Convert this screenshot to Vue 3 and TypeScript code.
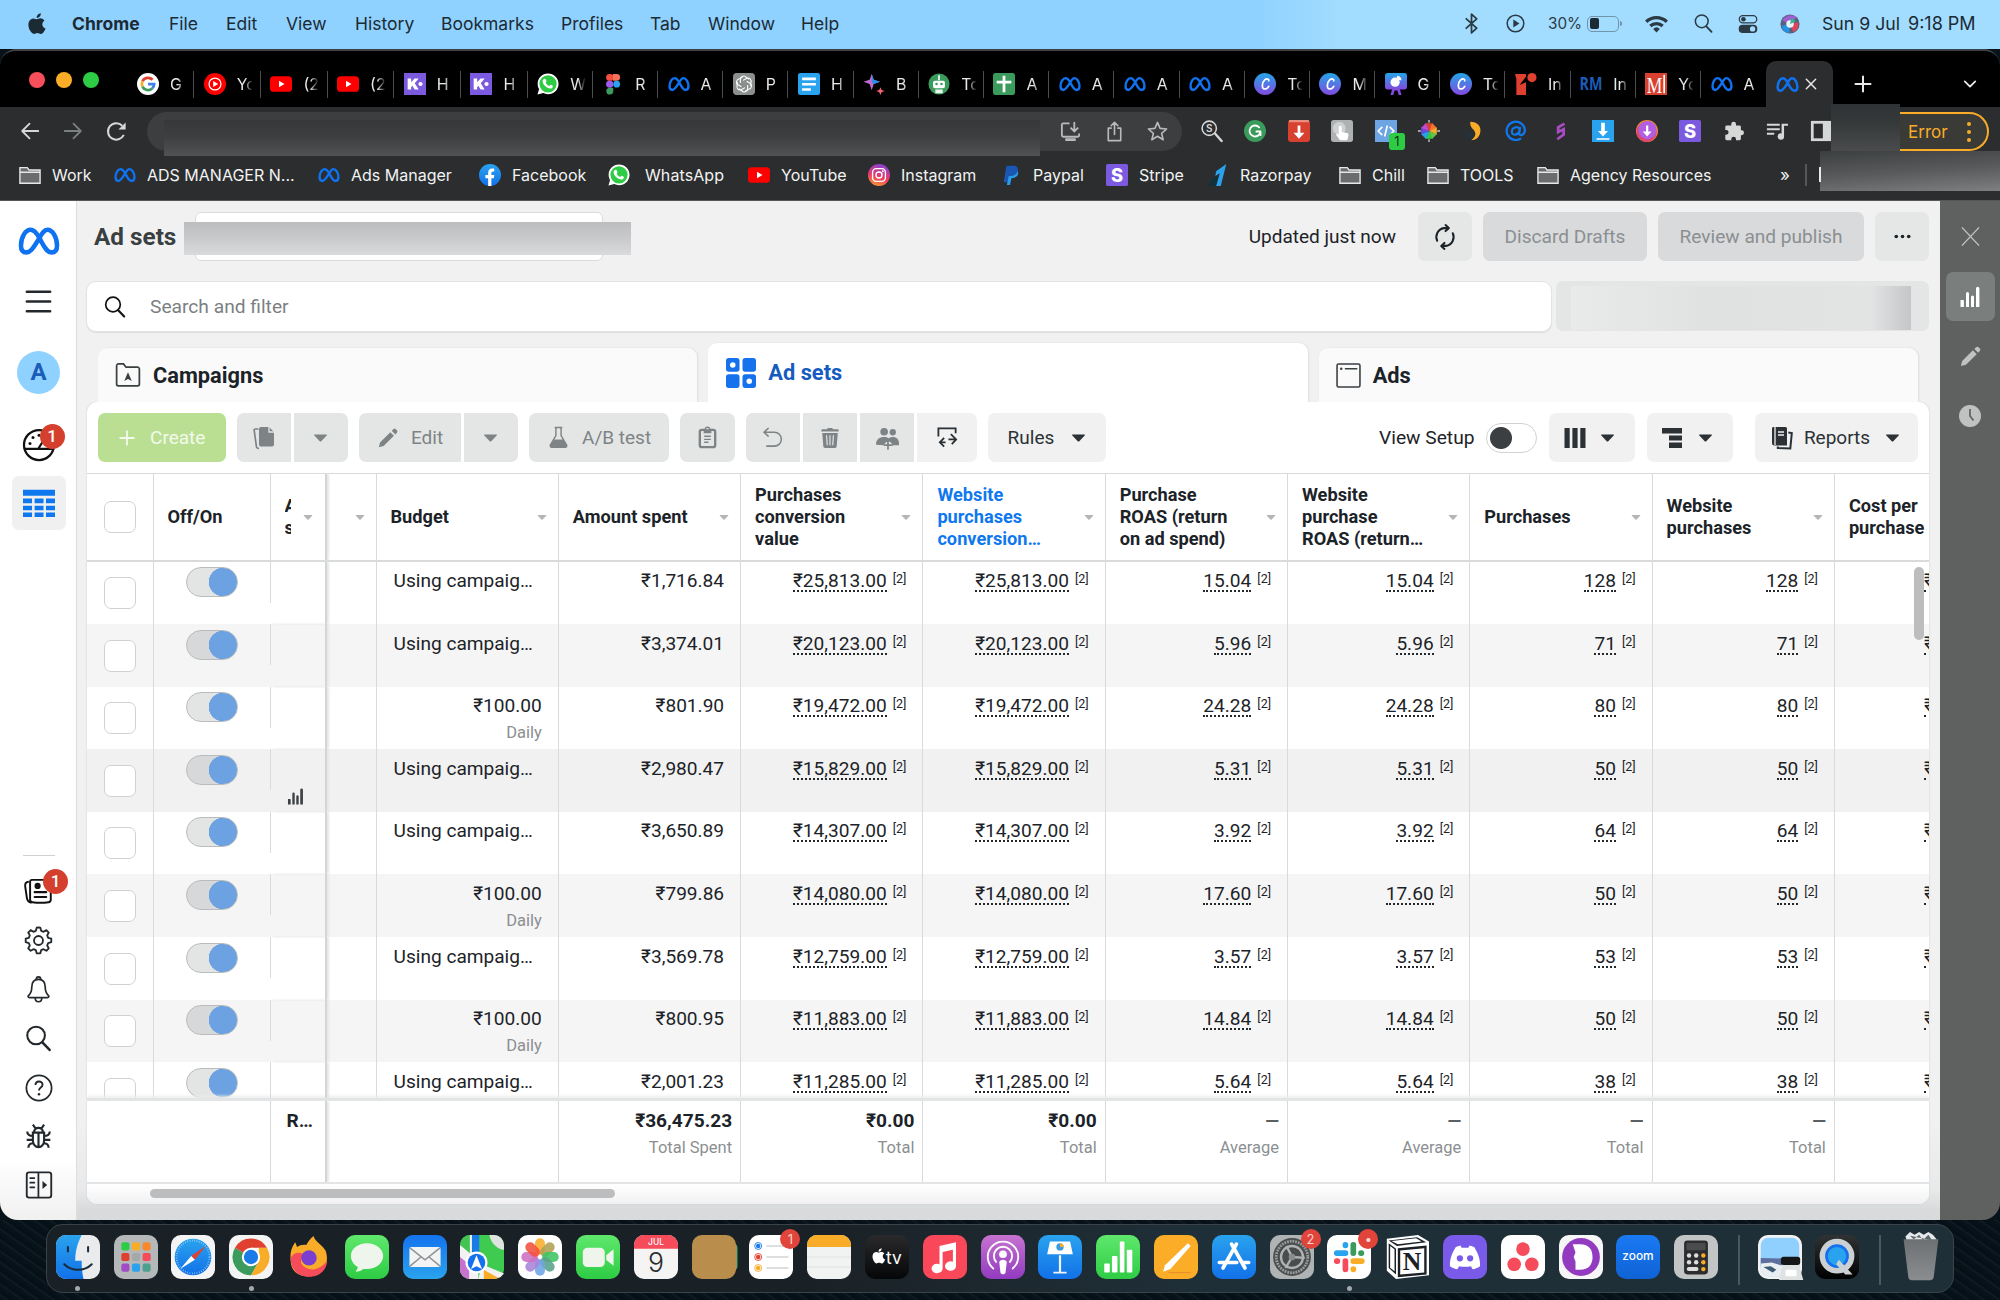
<script setup lang="ts">
import { h } from 'vue'

type IconProps = { n: string; s?: number; w?: number }

const line = (d: string, w = 1.6) =>
  `<path d="${d}" fill="none" stroke="currentColor" stroke-width="${w}" stroke-linecap="round" stroke-linejoin="round"/>`
const fill = (d: string, c = 'currentColor') => `<path d="${d}" fill="${c}"/>`
const dot = (x: number, y: number, r: number, c: string) => `<circle cx="${x}" cy="${y}" r="${r}" fill="${c}"/>`
const box = (x: number, y: number, w: number, hh: number, r: number, c: string) =>
  `<rect x="${x}" y="${y}" width="${w}" height="${hh}" rx="${r}" fill="${c}"/>`
const tile = (c: string) => box(0, 0, 24, 24, 5.4, c)
const grad = (id: string, a: string, b: string) =>
  `<defs><linearGradient id="${id}" x1="0" y1="0" x2="0" y2="1"><stop offset="0" stop-color="${a}"/><stop offset="1" stop-color="${b}"/></linearGradient></defs>`
const petals = (n: number, cols: string[], draw: (c: string) => string) =>
  Array.from({ length: n }, (_, i) => `<g transform="rotate(${(i * 360) / n} 12 12)">${draw(cols[i % cols.length])}</g>`).join('')

const applePath = 'M17.6 12.700c0-2.500 2-3.600 2.100-3.700-1.200-1.700-3-1.900-3.600-1.900-1.500-.2-3 .9-3.700.9-.8 0-2-.9-3.200-.9C7.500 7.100 6 8 5.100 9.500c-1.800 3-.5 7.500 1.200 10 .9 1.200 1.900 2.500 3.200 2.500s1.800-.8 3.300-.8 2 .8 3.300.8c1.400 0 2.300-1.200 3.100-2.400 1-1.400 1.400-2.800 1.400-2.900-.1 0-3-1.100-3-4zM15.100 5.300c.7-.8 1.200-2 1-3.200-1 .1-2.200.7-2.900 1.500-.6.700-1.200 1.900-1 3 1.100.1 2.200-.5 2.900-1.300z'
const metaPath = 'M12 9.800C10.300 7 8.900 5.600 7.200 5.600 4.200 5.600 1.700 10 1.700 14.500c0 2.600 1.100 4 3.100 4S8.200 17 12 10.600c1.900-3.400 3.100-5 4.800-5 3 0 5.500 4.400 5.500 8.900 0 2.600-1.100 4-3.100 4S16 17.200 13.700 13z'
const barsPath = 'M2.500 15h2.600a.8.800 0 0 1 .8.800V22H2.500zM8 8.500a1.500 1.500 0 0 1 3 0V22H8zM13 12a1.500 1.500 0 0 1 3 0v10h-3zM18 3.500a1.700 1.700 0 0 1 3.400 0V22H18z'
const pencilPath = 'M2 22l1.300-5.200L14.500 5.600l4 4L7.200 20.700zM16 4.200l1.800-1.800a1.900 1.900 0 0 1 2.700 0l1.200 1.200a1.900 1.900 0 0 1 0 2.700L20 8.100z'
const slack =
  box(3.800, 8.300, 7.800, 3.100, 1.500, '#2aa3ee') + box(8.500, 3.800, 3.100, 3.400, 1.500, '#2aa3ee') +
  box(12.800, 3.800, 3.100, 7.600, 1.500, '#3a9b5c') + box(17, 8.300, 3.300, 3.100, 1.500, '#3a9b5c') +
  box(12.800, 12.700, 7.700, 3.100, 1.500, '#f8ac28') + box(12.800, 17, 3.100, 3.300, 1.500, '#f8ac28') +
  box(8.500, 12.700, 3.100, 7.600, 1.500, '#f54b5b') + box(3.800, 12.700, 3.400, 3.100, 1.500, '#f54b5b')

const icons: Record<string, string> = {
  apple: fill(applePath),
  meta: `<path d="${metaPath}" fill="none" stroke="#0f72f0" stroke-width="2.600" stroke-linejoin="round"/>`,
  bt: line('M7 7.500l10 9-5 4.500V3l5 4.500-10 9', 1.700),
  play: `<circle cx="12" cy="12" r="9.500" fill="none" stroke="currentColor" stroke-width="1.700"/>` + fill('M9.500 7.500l7 4.500-7 4.500z'),
  wifi: fill('M1 9.200a16 16 0 0 1 22 0l-2.200 2.300a12.800 12.800 0 0 0-17.600 0zM5 13.300a10.200 10.200 0 0 1 14 0l-2.200 2.300a7 7 0 0 0-9.600 0zM8.800 17.200a4.700 4.700 0 0 1 6.400 0L12 20.600z'),
  lens: `<circle cx="10" cy="9.500" r="7.300" fill="none" stroke="currentColor" stroke-width="1.700"/>` + line('M15.200 15.200l6 6.300', 2.100),
  control: `<rect x="1.500" y="2" width="21" height="8.600" rx="4.300" fill="none" stroke="currentColor" stroke-width="1.500"/>` + dot(6.5, 6.300, 2.800, 'currentColor') + box(.8, 13, 22.400, 9.800, 4.900, 'currentColor') + dot(17.500, 17.900, 3.200, '#a5ddff'),
  siri: dot(12, 12, 11.500, '#53627a') + fill('M3 8a11 11 0 0 1 17-4L12 12z', '#a05fd0') + fill('M22 10a11 11 0 0 1-6 12l-4-10z', '#e0435d') + fill('M2 14a11 11 0 0 0 9 9l1-11z', '#2493e6') + dot(12, 12, 4.500, '#e8f3fa') + fill('M14 4l5 5-7 3z', '#36b28c'),
  google: dot(12, 12, 12, '#fff') + `<g fill="none" stroke-width="3"><path d="M17 7.300A6.800 6.800 0 0 0 6 9" stroke="#e0402f"/><path d="M6 9a6.800 6.800 0 0 0 0 6" stroke="#f8ac28"/><path d="M6 15a6.800 6.800 0 0 0 10.500 2" stroke="#3a9b5c"/><path d="M16.500 17a6.500 6.500 0 0 0 2.200-5H12" stroke="#3b82ea"/></g>`,
  ytm: dot(12, 12, 12, '#f00') + `<circle cx="12" cy="12" r="6.500" fill="none" stroke="#fff" stroke-width="1.300"/>` + fill('M10 8.700l5.500 3.300L10 15.300z', '#fff'),
  yt: box(0, 3.500, 24, 17, 4, '#f00') + fill('M9.800 8.500l6 3.500-6 3.500z', '#fff'),
  k: box(0, 0, 24, 24, 0, '#7c5ae0') + fill('M4 6h3.800v4.200L11.500 6H16l-4.300 5.300L16 18h-4.400l-2.500-4.200-1.300 1.500V18H4z', '#fff') + dot(18, 12, 2.300, '#fff'),
  wa: fill('M12 .5C5.600.5.700 5.400.700 11.600c0 2.200.6 4.200 1.600 5.900L.5 23.500l6.300-1.600c1.600.8 3.300 1.300 5.200 1.300 6.400 0 11.500-5.100 11.500-11.500S18.400.5 12 .5z', '#fff') + dot(12, 11.800, 9.400, '#2ecc45') + fill('M8.300 6.300c.6-.1 1 .1 1.200.6l.9 2-1 1.600c.9 1.700 2.200 2.900 3.900 3.700l1.400-1.500 2.600 1.200c.3 1.900-1.200 3.100-2.700 3.100-4 0-8.500-4.500-8.500-7.900 0-1.300 1-2.600 2.200-2.800z', '#fff'),
  figma: box(4.500, 1, 8, 7.500, 3.700, '#f2503c') + fill('M12 1h4a3.700 3.700 0 0 1 0 7.500h-4z', '#f5705c') + box(4.500, 8.500, 7.800, 7.500, 3.700, '#9d5bef') + dot(16, 12.200, 3.700, '#2aa3ee') + fill('M8 16h4.300v3.700A3.800 3.800 0 1 1 8 16z', '#3a9b5c'),
  gpt: box(0, 0, 24, 24, 4, '#8b908f') + petals(6, ['#fff'], c => `<path d="M8 11V6.800a3.600 3.600 0 0 1 6.500-2l3.200 2" fill="none" stroke="${c}" stroke-width="1.200"/>`),
  docs: box(0, 0, 24, 24, 2.500, '#2aa3ee') + fill('M4.500 5h15v2.800h-15zM4.500 10.800h15v2.700h-15zM4.500 16.500h9.500v2.800H4.500z', '#fff'),
  bard: fill('M9.500 1l2.200 6.300 6.800 2.200-6.800 2.500-2.200 6.800-2.300-6.800L.5 9.500l6.700-2.200z', '#c06bd0') + fill('M9.500 1l2.200 6.300 6.800 2.200-6.800 2.500-2.200-2z', '#2b8de8') + fill('M19 15.500l1.300 3 3.200 1.200-3.200 1.300-1.300 3-1.300-3-3.200-1.300 3.200-1.200z', '#f06272'),
  bot: dot(12, 12, 11.500, '#3a9b5c') + box(5.500, 8.500, 13, 8, 2, '#fff') + dot(9.300, 12, 1.400, '#3a9b5c') + dot(14.700, 12, 1.400, '#3a9b5c') + fill('M11 2.500h2V8h-2zM8 18h8v4H8z', '#eaf6ec'),
  sheet: box(0, 0, 24, 24, 2.500, '#3a9b5c') + fill('M10.500 3h3v5.500H20v3h-6.500V21h-3v-9.500H4v-3h6.500z', '#fff'),
  canva: grad('cv', '#22a6e8', '#8449e0') + dot(12, 12, 12, 'url(#cv)') + `<path d="M16 8.500c.7-2-2-3-4.300-.9-3 2.700-3.700 9.700-.2 9.800 2 .1 3.800-1.400 4.600-2.900" fill="none" stroke="#fff" stroke-width="1.900" stroke-linecap="round"/>`,
  chart: grad('ch', '#22a6e8', '#8449e0') + box(0, 0, 24, 18, 3, 'url(#ch)') + fill('M8 17l-2 7h3l1.500-5h3l1.500 5h3l-2-7z', '#8449e0') + dot(11, 10, 5, '#fff') + fill('M13 3a5 5 0 0 1 5 5h-5z', '#fff'),
  rdot: fill('M0 1h12v3L5 13l7-3v14H1.500V6.500z', '#e0402f') + dot(18.500, 5, 5, '#e0402f'),
  rm: `<text x="12" y="19" font-size="19" font-weight="700" text-anchor="middle" textLength="25" lengthAdjust="spacingAndGlyphs" fill="#1d5bb8" font-family="Open Sans, sans-serif">RM</text>`,
  mi: box(0, 0, 24, 24, 0, '#d8402f') + `<text x="10.500" y="21.500" font-size="25" text-anchor="middle" textLength="17" lengthAdjust="spacingAndGlyphs" fill="#fff" font-family="Liberation Serif, serif">M</text>` + box(20, 2, 1.800, 20, 0, '#fff'),
  x: line('M5 5l14 14M19 5L5 19', 2.200),
  thinx: line('M3.500 3l17 18M20.500 3l-17 18', 1.500),
  plus: line('M12 3v18M3 12h18', 2.400),
  chev: line('M5 8.500l7 7 7-7', 2.400),
  back: line('M21 12H4M11.500 4L3.500 12l8 8', 2),
  fwd: line('M3 12h17M12.500 4l8 8-8 8', 2),
  reload: `<path d="M19.600 15.500A8.600 8.600 0 1 1 18 6" fill="none" stroke="currentColor" stroke-width="2.100"/>` + fill('M21.500 2.500V10H14z'),
  install: `<path d="M11 3.500H4.500A1.500 1.500 0 0 0 3 5v11a1.500 1.500 0 0 0 1.500 1.500h15A1.500 1.500 0 0 0 21 16v-2M16 2v9.500M12 8l4 4 4-4" fill="none" stroke="currentColor" stroke-width="1.900"/>` + box(6.500, 19, 11, 3, .5, 'currentColor'),
  share: line('M8.500 8.500H5.500v13h13v-13h-3M12 15V2.500M8.500 6L12 2.500 15.500 6', 1.700),
  star: line('M12 2.500l2.700 6.300 6.800.6-5.200 4.500 1.600 6.700-5.900-3.600-5.900 3.600 1.600-6.700L2.500 9.400l6.800-.6z', 1.700),
  seo: `<circle cx="9" cy="9" r="7.800" fill="none" stroke="currentColor" stroke-width="1.700"/><text x="9" y="13" font-size="11" text-anchor="middle" fill="currentColor" font-family="Inter, sans-serif" font-weight="600">S</text>` + line('M15.500 15l7 8', 2.600),
  gram: dot(12, 12, 12, '#3a9b5c') + line('M16.500 8a6 6 0 1 0 1.500 4.500h-4.500M18 12.500v4', 2).replace('currentColor', '#fff'),
  red: box(0, 0, 24, 24, 3.500, '#d8402f') + box(1, 0, 22, 2.500, 1, '#e88d80') + fill('M10.500 6h3v8H18l-6 6.500L6 14h4.500z', '#fff'),
  tap: box(0, 0, 24, 24, 3, '#aeb2b2') + dot(9, 9, 7, '#cfd2d2') + fill('M8.500 8a1.600 1.600 0 0 1 3.200 0v5l5.800 1.300c1.500.4 1.800 1.400 1.500 2.700l-1.200 5h-8L5.500 16l1.200-1.300 1.800 1.300z', '#fff'),
  code: box(0, 0, 24, 24, 0, '#6da4e3') + `<path d="M8 7.500L3.500 12 8 16.500M16 7.500l4.500 4.500-4.500 4.500M13.500 6l-3 12" fill="none" stroke="#fff" stroke-width="1.800"/>`,
  wheel: petals(8, ['#d8402f', '#f8702c', '#f8ac28', '#6cc04a', '#2ecc45', '#2aa3ee', '#6a4be0', '#c24ad0'], c => fill('M12 12L8.200 3.500h7.600z', c)) + `<path d="M12 0v3M12 21v3M0 12h3M21 12h3" stroke="#ccc" stroke-width="1.500"/>`,
  swirl: fill('M9 2c8 0 12 5 11 11s-5 9-10 9c4-3 6-6 3.500-10C12 9.500 8.500 8 9 2z', '#f8ac28') + fill('M5 10c-1 7 2 11 6 11 2-3 1-5-1-7-2-1.500-4-1-5-4z', '#23323c'),
  at: `<path d="M16.500 7.500l-1 7.500c-.3 2 5 3 6.300-3.500A10 10 0 1 0 17.500 20M16 11.500c0-6-8.500-4-8.500 1.200 0 5.300 7.500 4 8.500-1.200z" fill="none" stroke="#0f78ee" stroke-width="2.400"/>`,
  bolt: `<path d="M17 4l-7 4v5l6-3v6l-7 5" fill="none" stroke="#a94cc4" stroke-width="3"/>`,
  down: box(0, 0, 24, 24, 0, '#2aa3ee') + fill('M10 3h4v9h3.500L12 18l-5.500-6H10zM5 20h14v1.500H5z', '#fff'),
  down2: dot(12, 12, 12, '#f0883c') + dot(11.500, 13, 11, '#e0446e') + dot(12.500, 11, 10, '#b25ee0') + fill('M11 6h2.400v6.500H17L12.200 18l-4.900-5.500H11z', '#fff'),
  s: box(0, 0, 24, 24, 2, '#7c5ae0') + `<text x="12" y="19.500" font-size="20" font-weight="800" text-anchor="middle" fill="#fff" font-family="Inter, sans-serif">S</text>`,
  puzzle: fill('M9 4.500a2.600 2.600 0 0 1 5.200 0V6H18a1.500 1.500 0 0 1 1.500 1.500v3.800h.8a2.600 2.600 0 0 1 0 5.200h-.8v4A1.500 1.500 0 0 1 18 22h-3.800v-1a2.600 2.600 0 0 0-5.200 0v1H4a1.500 1.500 0 0 1-1.500-1.500V16h1a2.600 2.600 0 0 0 0-5.200h-1V7.500A1.500 1.500 0 0 1 4 6h5z'),
  queue: fill('M1 4h14v2.200H1zM1 9h14v2.200H1zM1 14h8v2.200H1zM17 4h7v2.400h-4.300V18a3.500 3.500 0 1 1-2.700-3.400z'),
  panel: `<rect x="2.500" y="2.500" width="19" height="19" fill="none" stroke="currentColor" stroke-width="3"/>` + fill('M14 3h8v18h-8z'),
  folder: `<path d="M1 4h8l2 2.500h12V21H1z" fill="#6a6c6d" stroke="#e8e8e8" stroke-width="1.500"/><path d="M1 9h22" stroke="#e8e8e8" stroke-width="1.500"/>`,
  fb: grad('fb', '#2aa3ee', '#1271e8') + dot(12, 12, 12, 'url(#fb)') + fill('M10 24v-8.500H7V12h3V9.500C10 6.500 11.800 5 14.300 5c1.200 0 2.300.2 2.300.2v2.900h-1.500c-1.200 0-1.600.8-1.600 1.600V12h3.200l-.5 3.500h-2.700V24z', '#fff'),
  ig: `<defs><linearGradient id="ig" x1="0" y1="1" x2=".3" y2="0"><stop offset="0" stop-color="#f8ac28"/><stop offset=".5" stop-color="#ee3a63"/><stop offset="1" stop-color="#9440c8"/></linearGradient></defs>` + dot(12, 12, 12, 'url(#ig)') + `<g fill="none" stroke="#fff" stroke-width="1.500"><rect x="5" y="5" width="14" height="14" rx="4"/><circle cx="12" cy="12" r="3.300"/></g>` + dot(16.200, 7.900, 1, '#fff'),
  pp: fill('M7 2h8c4 0 5.500 3 4 6.500s-4 4.500-8 4.500L9.500 20H4z', '#1a56b4') + fill('M19.500 7c1.500 5-1.500 8.500-7 8.500L11 23H7.500l2-10c5 0 8.500-1 10-6z', '#2a9be8'),
  rzp: fill('M10 8L21 0l-6 24h-5l4-14-5 3z', '#2aa3ee') + fill('M5 16l7-3-3 11H2z', '#11313f'),
  menu: line('M3 4.500h18M3 12h18M3 19.500h18', 2),
  gauge: `<circle cx="12" cy="12" r="10" fill="none" stroke="currentColor" stroke-width="1.500"/>` + line('M2.500 14.500h19M11.500 14.500L15 9', 1.500) + dot(6, 11, 1, 'currentColor') + dot(8, 7, 1, 'currentColor') + dot(12, 5.500, 1, 'currentColor'),
  grid: fill('M0 2h24v4.500H0zM0 8.700h6.800v3.500H0zM8.700 8.700h6.700v3.500H8.700zM17.200 8.700H24v3.500h-6.800zM0 14h6.800v3.500H0zM8.700 14h6.700v3.500H8.700zM17.200 14H24v3.500h-6.800zM0 19.200h6.800V22.500H0zM8.700 19.200h6.700V22.500H8.700zM17.200 19.200H24V22.500h-6.800z'),
  news: `<path d="M7 3h12.500a2 2 0 0 1 2 2v13.500a2 2 0 0 1-1.800 1.800q-6 .8-12.400 0A2 2 0 0 1 5.500 18.500V4.500A1.500 1.500 0 0 1 7 3zM4.500 4.500C2 4.500 1.500 6 1.700 8l1.300 9c.3 2 1.500 3.500 3.500 3.800" fill="none" stroke="currentColor" stroke-width="1.500"/>` + line('M9 12.500h9M9 16.300h9', 1.600) + dot(11.300, 7.700, 2.400, 'currentColor'),
  gear: `<path d="M12 1.200l1.500.2.700 2.600 2 .8 2.300-1.400 2 2-1.300 2.400.8 2 2.600.7v2.900l-2.600.7-.8 2 1.300 2.400-2 2-2.300-1.300-2 .8-.7 2.600h-3L9.800 20l-2-.8-2.300 1.300-2-2 1.300-2.400-.8-2-2.600-.7v-2.900L4 9.800l.8-2-1.300-2.400 2-2L7.800 4.800l2-.8.7-2.600z" fill="none" stroke="currentColor" stroke-width="1.500" stroke-linejoin="round"/><circle cx="12" cy="12" r="3.700" fill="none" stroke="currentColor" stroke-width="1.500"/>`,
  bell: line('M12 3c-4 0-6 3-6 7 0 5-1.500 6-3 7.500-.5.700-.2 1.700 1 1.700h16c1.200 0 1.500-1 1-1.700-1.500-1.500-3-2.500-3-7.500 0-4-2-7-6-7zM10 3c0-3 4-3 4 0M9 19.500c.3 4.500 5.700 4.500 6 0', 1.500),
  help: `<circle cx="12" cy="12" r="10.800" fill="none" stroke="currentColor" stroke-width="1.500"/><path d="M9 9.500c0-4 6-4 6-.3 0 2.600-3 2.300-3 5" fill="none" stroke="currentColor" stroke-width="1.600"/>` + dot(12, 17.300, 1.100, 'currentColor'),
  bug: `<path d="M7 8.500h10v7a5 6 0 0 1-10 0zM8 8.500c0-5.500 8-5.500 8 0M12 8.500v13M7 1.500l2.500 3.500M17 1.500L14.500 5M2 7.500c0 3 2 4 5 4M22 7.500c0 3-2 4-5 4M1.500 15H7M17 15h5.500M3 22c0-3 2-4 4.500-4M21 22c0-3-2-4-4.500-4" fill="none" stroke="currentColor" stroke-width="1.900"/>`,
  sidepanel: `<rect x="1.500" y="1.200" width="21" height="21.600" rx="2" fill="none" stroke="currentColor" stroke-width="1.600"/>` + line('M11.500 2v20M4.500 6h3.500M4.500 10h3.500M4.500 14h3.500', 1.500) + fill('M15 8.500l4 3.500-4 3.500z'),
  refresh: line('M4.800 15.500A8.300 8.300 0 0 1 11 3.800h4M12.500 1l3 2.800-3 2.700M19.200 8.500A8.300 8.300 0 0 1 13 20.200H9M11.500 17.500l-3 2.800 3 2.700', 1.900),
  more: dot(5.500, 12, 1.900, 'currentColor') + dot(12, 12, 1.900, 'currentColor') + dot(18.500, 12, 1.900, 'currentColor'),
  camp: `<path d="M1.500 3.500A1.700 1.700 0 0 1 3.200 1.800h4.600l2.400 3h10.600a1.700 1.700 0 0 1 1.700 1.700v13.800a1.700 1.700 0 0 1-1.700 1.700H3.200a1.700 1.700 0 0 1-1.700-1.700z" fill="none" stroke="currentColor" stroke-width="1.600"/>` + fill('M12 9.500l3.500 8-3.500-1.800-3.500 1.800z'),
  sets: box(0, 0, 10.800, 11, 2.200, '#1571ec') + box(13.200, 0, 10.800, 11, 2.200, '#1571ec') + box(0, 13, 10.800, 11, 2.200, '#1571ec') + box(13.200, 13, 10.800, 11, 2.200, '#1571ec') + dot(5.400, 5.500, 2.200, '#fff') + dot(18.600, 18.500, 2.200, '#fff'),
  ads: `<rect x="1" y="1" width="22" height="22" rx="1.500" fill="none" stroke="currentColor" stroke-width="1.500"/>` + dot(5, 5.500, 1.200, 'currentColor') + line('M9 5.500h11', 1.300),
  copy: fill('M9 1h8l5 5v12.500a2 2 0 0 1-2 2H9a2 2 0 0 1-2-2V3a2 2 0 0 1 2-2z') + `<path d="M17 .5V6h5.500" fill="none" stroke="#e4e6e6" stroke-width="1.300"/><path d="M6.500 3H3.500c-1 0-1.500.5-1.300 1.500l2.200 16c.2 1.400 1 2 2.600 2" fill="none" stroke="currentColor" stroke-width="1.700"/>`,
  caret: fill('M3 7h18c1.300 0 1.600.9.900 1.900l-8.300 8.800a2.200 2.200 0 0 1-3.200 0L2.100 8.900C1.400 7.900 1.700 7 3 7z'),
  pencil: fill(pencilPath),
  flask: `<path d="M8 1.500h8M9.300 2v8L3.500 20a1.600 1.600 0 0 0 1.400 2.300h14.200a1.600 1.600 0 0 0 1.400-2.300L14.700 10V2" fill="none" stroke="currentColor" stroke-width="1.500"/>` + fill('M7.300 14h9.400l4.200 7-1.400 1.500h-15L3 21z'),
  clip: `<rect x="4" y="4" width="16" height="18" rx="2" fill="none" stroke="currentColor" stroke-width="2.500"/><circle cx="12" cy="3.500" r="2.200" fill="#e4e6e6" stroke="currentColor" stroke-width="1.500"/>` + fill('M8 3.500h8v4H8zM8.500 10h7v1.500h-7zM8.500 13.200h7v1.500h-7zM8.500 16.300H13v1.500H8.500z'),
  undo: line('M7.500 2.500L3 6.500l4.500 4M3.500 6.500H14a7 7 0 0 1 0 14.500H6', 1.600),
  trash: fill('M8.500 2.500A2 2 0 0 1 10.300 1h3.400a2 2 0 0 1 1.800 1.500H20A1.500 1.500 0 0 1 21.500 4v1h-19V4A1.500 1.500 0 0 1 4 2.500z') + fill('M3.500 6.500h17L19.300 21a2 2 0 0 1-2 2H6.700a2 2 0 0 1-2-2z') + `<path d="M8.300 9l.7 11M12 9v11M15.700 9L15 20" stroke="#e4e6e6" stroke-width="1.300"/>`,
  people: dot(8.500, 6, 4, 'currentColor') + dot(17.500, 6.500, 3.300, 'currentColor') + fill('M0 19.500C0 14 3.500 11.500 8.500 11.500c2 0 3.500.5 4.700 1.300 1.300-.9 2.800-1.300 4.300-1.300 4 0 6.500 2.500 6.500 6.500v2h-7c-1-5-7-5-8.500 0z') + line('M12.500 16v8M9 20h7.500', 1.800),
  swap: `<path d="M2.500 11V2.500h18v5M8.500 12.500L4 17l4.500 4.500M4 17h6M15.500 8.500L21 14l-4.500 5M21 14h-8" fill="none" stroke="currentColor" stroke-width="1.900"/>`,
  cols: fill('M1.500 2h5.200v20H1.500zM9.400 2h5.200v20H9.400zM17.300 2h5.200v20h-5.200z'),
  tree: fill('M1 2h20v5.500H1zM8 9.500h13v5H8zM8 16.500h13V22H8z'),
  report: fill('M3 1h12.500A1.500 1.500 0 0 1 17 2.500v17H4.500A2.500 2.500 0 0 1 2 17V2z') + `<path d="M5 1v18M8 6h6M8 9h6" stroke="#f0f0f0" stroke-width="1.300"/><path d="M18.300 6.500l3.500.5-1.500 15.500-12.500-.5v-1.500" fill="none" stroke="currentColor" stroke-width="2"/>`,
  bars: fill(barsPath),
  clock: dot(12, 12, 11, 'currentColor') + `<path d="M12 5v7l3.500 4.500" fill="none" stroke="#5f6160" stroke-width="1.700"/>`,
  finder: grad('fi', '#2aa3ee', '#1271e8') + tile('#e9ebec') + fill('M14 0C11 6 10.500 10 10.500 14h3.500c0 4 .3 7 1 10H5.400A5.400 5.400 0 0 1 0 18.600V5.400A5.400 5.400 0 0 1 5.400 0z', 'url(#fi)') + `<path d="M6.500 6.500v2.500M17.500 6.500v2.500M4.500 16c4 4 11 4 15 0" fill="none" stroke="#1a2a38" stroke-width="1.100" stroke-linecap="round"/>`,
  launch: tile('#b5b8b8') + ['#2ecc45', '#f8ac28', '#f8882c', '#e0402f', '#a5a8a8', '#f54b5b', '#a04cc4', '#2aa3ee', '#4ca08c'].map((c, i) => box(4 + (i % 3) * 5.800, 4 + Math.floor(i / 3) * 5.800, 4.400, 4.400, 1, c)).join(''),
  safari: tile('#f4f4f4') + grad('sa', '#2aa3ee', '#1271e8') + dot(12, 12, 10, 'url(#sa)') + `<circle cx="12" cy="12" r="9" fill="none" stroke="#bfe2f8" stroke-width="1" stroke-dasharray=".3 1"/>` + fill('M19 6l-6 7.500-2-2z', '#e0402f') + fill('M5 18.500l6-7 2 2z', '#fff'),
  chrome: tile('#f4f4f4') + fill('M3.300 7A10 10 0 0 0 12 22l4.300-7.500L12 12z', '#3a9b5c') + fill('M20.700 7A10 10 0 0 1 12 22l4.300-7.500V7z', '#f8ac28') + fill('M12 12L3.300 7a10 10 0 0 1 17.400 0H12z', '#e0402f') + dot(12, 12, 5, '#fff') + dot(12, 12, 3.900, '#1a7ae8'),
  firefox: fill('M2 14C1.500 9 3 6 4.500 4l1 2.500C7 5.500 9 5 10.500 5.500 11.500 3.500 13 1.500 14.500.5c.5 3 5 5 6.500 8 2.500 7-1 14-9 14S2.200 18 2 14z', '#f8ac28') + fill('M2 13c.2 6 4 9.800 10 9.800S21.500 19 22 14c-5 6-11 6-14 2-1-2 0-4 3-4C8 8.500 3 9 2 13z', '#f54b5b') + dot(12, 12.500, 4.200, '#7a3fd0'),
  messages: grad('ms', '#5fe86c', '#2ecc45') + tile('url(#ms)') + fill('M12 4.500c-5 0-8.800 3-8.800 7 0 2.500 1.500 4.700 3.800 6-.2 1.200-.8 2-1.300 2.500 2 0 3.300-.7 4.300-1.500.6.100 1.300.1 2 .1 5 0 8.800-3.200 8.800-7.100s-3.800-7-8.800-7z', '#eef5ec'),
  mail: grad('ml', '#1573ee', '#2aa3ee') + tile('url(#ml)') + box(3.500, 6.500, 17, 11, 1, '#f2f3f3') + `<path d="M3.800 7l8.200 6.500L20.200 7M3.800 17l6-5M20.200 17l-6-5" fill="none" stroke="#8e9294" stroke-width=".8"/>`,
  maps: tile('#3ecb50') + fill('M5.400 0H10v24H5.400A5.400 5.400 0 0 1 0 18.600V6z', '#f2f2f2') + box(6.500, 0, 4, 14, 0, '#1a7ae8') + fill('M0 12l5 4v8A5.400 5.400 0 0 1 0 18.600z', '#c673cf') + fill('M0 5.400A5.400 5.400 0 0 1 5.400 0v10L0 5.400z', '#43c554') + fill('M16 0c1 5 5 8 8 8V5.400A5.400 5.400 0 0 0 18.600 0z', '#dfe3e0') + fill('M12 16l12 5-2 2-3.400 1H10z', '#f2f2f2') + fill('M13 19l8 4.500-2.400.5H13z', '#f8ac28') + dot(9, 15, 6, '#fff') + dot(9, 15, 4.800, '#1571ec') + fill('M9 11l3 7.500-3-1.500-3 1.500z', '#fff'),
  photos: tile('#fff') + petals(8, ['#f8ac28', '#b0a052', '#3fc463', '#5aa08c', '#6da4e3', '#a984d8', '#cd6fc3', '#f4503c'], c => `<rect x="9.300" y="1.800" width="5.400" height="9" rx="2.700" fill="${c}" opacity=".88"/>`),
  facetime: grad('ft', '#5fe86c', '#2ecc45') + tile('url(#ft)') + box(3.700, 7, 12, 10.500, 2.500, '#f0f5ec') + fill('M16.500 11l4-3.200v9l-4-3.200z', '#eef5ec'),
  cal: tile('#f4f4f4') + fill('M0 7.500V5.400A5.400 5.400 0 0 1 5.400 0h13.200A5.400 5.400 0 0 1 24 5.400v2.100z', '#f54b5b') + `<text x="12" y="5.700" font-size="4.600" text-anchor="middle" fill="#fff" font-family="Inter, sans-serif" font-weight="500">JUL</text><text x="12" y="20.300" font-size="14.500" text-anchor="middle" fill="#2b2d2e" font-family="Inter, sans-serif" font-weight="300">9</text>`,
  box: box(1, 4, 23.800, 16, 3, '#6da66a') + tile('#b98e4c'),
  remind: tile('#fff') + ['#1a7ae8', '#e0402f', '#f8ac28'].map((c, i) => `<circle cx="5" cy="${6 + i * 6}" r="1.900" fill="none" stroke="${c}" stroke-width=".5"/>` + dot(5, 6 + i * 6, 1.200, c) + `<path d="M9.500 ${6 + i * 6}h12" stroke="#b5b8b8" stroke-width=".5"/>`).join(''),
  notes: tile('#f1f2f2') + fill('M0 6.500V5.400A5.400 5.400 0 0 1 5.400 0h13.200A5.400 5.400 0 0 1 24 5.400v1.100z', '#f8ac28') + `<path d="M0 12h24M0 17.500h24" stroke="#dcdcdc" stroke-width=".4"/>`,
  tv: grad('tv', '#2a2a2c', '#050607') + tile('url(#tv)') + `<g transform="translate(2.300 6.300) scale(.42)" color="#fff">${fill(applePath)}</g><text x="15.800" y="15.800" font-size="9.500" text-anchor="middle" fill="#fff" font-family="Inter, sans-serif">tv</text>`,
  music: tile('#f9485a') + fill('M9 6l9-2v13a3 2.600 0 1 1-1.700-2.400V8L10.700 9.300v9a3 2.600 0 1 1-1.700-2.400z', '#fff'),
  pod: grad('po', '#c673d0', '#923bc0') + tile('url(#po)') + `<g fill="none" stroke="#fff" stroke-width="1"><path d="M7 18.500a8.300 8.300 0 1 1 10 0"/><path d="M8.500 15a5 5 0 1 1 7 0"/></g>` + dot(12, 10.500, 2.100, '#fff') + fill('M10 15c0-2 4-2 4 0l-.6 5.500c-.2 1.300-2.600 1.300-2.800 0z', '#fff'),
  keynote: grad('kn', '#2aa3ee', '#1271e8') + tile('url(#kn)') + fill('M6.500 3.500h11l1.500 7H5z', '#fff') + dot(12, 6.500, 2, '#3a9be0') + fill('M12 4.500a2 2 0 0 1 2 2h-2z', '#f8ac28') + fill('M11.400 11h1.200v9h3v1H8.400v-1h3z', '#f4f4f4'),
  numbers: grad('nu', '#5fe86c', '#2ecc45') + tile('url(#nu)') + box(4.500, 15.500, 3, 5, .4, '#fff') + box(8.700, 11.500, 3, 9, .4, '#fff') + box(13, 3.500, 2.500, 17, .4, '#fff') + box(16.800, 8, 3, 12.500, .4, '#fff'),
  pages: tile('#fbad28') + fill('M18.500 4.500l1.500 1.500-11 12.500-4 1.500 1-3.500z', '#fff') + `<path d="M8 20.500h12" stroke="#e8902c" stroke-width=".6"/>`,
  store: grad('st', '#2aa3ee', '#1271e8') + tile('url(#st)') + `<path d="M13.300 5L6 18M10.700 5L18 18M4 15h9.500M17 15h3" stroke="#fff" stroke-width="2" stroke-linecap="round"/>`,
  prefs: tile('#b0b3b3') + dot(12, 12, 10.300, '#4a4c4d') + `<circle cx="12" cy="12" r="8.600" fill="none" stroke="#999c9c" stroke-width="1.500" stroke-dasharray="1 .5"/><circle cx="12" cy="12" r="6" fill="none" stroke="#b0b3b3" stroke-width="1.300"/><path d="M12 12l-3-6M12 12l7 .5M12 12l-3.500 6" stroke="#b0b3b3" stroke-width="1.300"/>` + dot(12, 12, 1.800, '#8a8d8d'),
  slack: tile('#fff') + slack,
  notion: fill('M1 2l17-2 6 3.500V22l-18 2-5-4.500z', '#fff') + fill('M2 3l15.500-1.800L22.500 4 6.500 6z', '#1a2026') + fill('M3.500 3.300l13.500-1.500 3 1.800L7 5z', '#fff') + fill('M2 4.500l4 3v14l-4-3.500z', '#1a2026') + fill('M2.800 6l2.400 1.800v12l-2.400-2z', '#fff') + fill('M7 7.200l15.700-1.500v15.800L7 23z', '#1a2026') + fill('M8.300 8.400l13.100-1.200V20.400L8.300 21.600z', '#fff') + `<text x="14.800" y="19" font-size="14" font-weight="700" text-anchor="middle" fill="#1a2026" font-family="Liberation Serif, serif">N</text>`,
  discord: tile('#7a5ae8') + fill('M7 6.500l2.500-.8.700 1.200h3.600l.7-1.200 2.500.8c2 3 3.500 7 3.200 10.500-1.500 1-2.700 1.500-4 1.700l-1-1.700c-2 .5-4.400.5-6.400 0l-1 1.700c-1.300-.2-2.500-.7-4-1.700C3.500 13.500 5 9.500 7 6.500z', '#fff') + dot(9.200, 12.700, 1.700, '#7a5ae8') + dot(14.800, 12.700, 1.700, '#7a5ae8'),
  asana: tile('#fff') + dot(12, 7.700, 3.700, '#f54b5b') + dot(7.200, 16, 3.700, '#f54b5b') + dot(16.800, 16, 3.700, '#f54b5b'),
  dee: tile('#f6f6f6') + dot(12, 12, 10.300, '#923bc0') + fill('M7.500 5h4c5 0 6.800 3 6.800 7s-2 7-6.800 7H9v-4.500l-1-2.500 1-2.500z', '#fff'),
  zoom: grad('zm', '#1a7af4', '#0f62d4') + tile('url(#zm)') + `<text x="12" y="13.800" font-size="6.500" text-anchor="middle" fill="#fff" font-family="Inter, sans-serif" font-weight="500">zoom</text>`,
  calc: tile('#c2c5c5') + box(5.500, 3, 13, 18.500, 1.800, '#2b2d2e') + box(6.800, 4.300, 10.400, 4, .6, '#4a4c4d') + [0, 1, 2, 3, 4, 5, 8].map(i => dot(8.200 + (i % 3) * 3.900, 11.200 + Math.floor(i / 3) * 3.700, 1.200, i % 3 === 2 ? '#f8ac28' : '#ddd')).join('') + box(7, 17.400, 6.300, 2.300, 1, '#ddd'),
  preview: tile('#f2f2f2') + box(1.500, 1.500, 21, 21, 4, '#8fd0ff') + fill('M1.500 12.500l21 .5v4h-21z', '#5c6f9f') + fill('M1.500 15.500l6-.5 5 1.500 10-.5v3a4 4 0 0 1-4 3.500h-13a4 4 0 0 1-4-4z', '#e8eef2') + fill('M3 17.500l4-.5 3 2-2 1.500z', '#3f5a72') + fill('M13.500 15h8.500l2.700 9.500H11.500z', '#dfe2e2') + box(15, 19, 6, 3.500, .5, '#fff') + box(12.500, 11.800, 10.500, 4.500, 1.500, '#141618'),
  qt: grad('qt', '#303234', '#000') + tile('url(#qt)') + dot(12, 11.500, 7.500, '#1571ec') + `<circle cx="12" cy="11.500" r="8" fill="none" stroke="#ccd0d2" stroke-width="3"/>` + dot(12, 11.500, 5, '#2aa3ee') + fill('M13 13.500l7.500 8h-4L11.500 16z', '#ccd0d2'),
  trash2: fill('M3.500 2.500L6 0l2.500 1.500L11 0l2.500 1.500L16 0l2.500 1.500 2 2.500-1 1.500h-15z', '#e4e8ea') + fill('M6 2l2 2 3-2.500 2 3 3-3 2 3', '#5a6468') + grad('tr', '#6c7072', '#8a8e90') + fill('M2.500 4h19l-2.500 20c-.2 2-1 2.300-2.500 2.300h-9C6 26.300 5.200 26 5 24z', 'url(#tr)')
}

const Ico = (p: IconProps) =>
  h('svg', {
    viewBox: '0 0 24 24',
    width: p.w ?? p.s ?? 22,
    height: p.s ?? 22,
    overflow: 'visible',
    'aria-hidden': 'true',
    innerHTML: icons[p.n]
  })

const menus: [string, number][] = [
  ['Chrome', 97], ['File', 57], ['Edit', 60], ['View', 69], ['History', 86], ['Bookmarks', 120],
  ['Profiles', 89], ['Tab', 58], ['Window', 93], ['Help', 60]
]

const tabs: [string, string][] = [
  ['google', 'G'], ['ytm', 'Yo'], ['yt', '(2'], ['yt', '(2'], ['k', 'H'], ['k', 'H'], ['wa', 'W'], ['figma', 'R'],
  ['meta', 'A'], ['gpt', 'P'], ['docs', 'H'], ['bard', 'B'], ['bot', 'To'], ['sheet', 'A'], ['meta', 'A'], ['meta', 'A'],
  ['meta', 'A'], ['canva', 'To'], ['canva', 'M'], ['chart', 'G'], ['canva', 'To'], ['rdot', 'In'], ['rm', 'In'],
  ['mi', 'Yo'], ['meta', 'A']
]

const exts = ['seo', 'gram', 'red', 'tap', 'code', 'wheel', 'swirl', 'at', 'bolt', 'down', 'down2', 's', 'puzzle', 'queue', 'panel']

const bookmarks: [string, string, number][] = [
  ['folder', 'Work', 95], ['meta', 'ADS MANAGER N...', 204], ['meta', 'Ads Manager', 161], ['fb', 'Facebook', 129],
  ['wa', 'WhatsApp', 140], ['yt', 'YouTube', 120], ['ig', 'Instagram', 132], ['pp', 'Paypal', 106], ['s', 'Stripe', 101],
  ['rzp', 'Razorpay', 132], ['folder', 'Chill', 88], ['folder', 'TOOLS', 110], ['folder', 'Agency Resources', 236]
]

type Col = { title: string[]; blue?: boolean; foot: string; sub: string }
const cols: Col[] = [
  { title: ['Budget'], foot: '', sub: '' },
  { title: ['Amount spent'], foot: '₹36,475.23', sub: 'Total Spent' },
  { title: ['Purchases', 'conversion', 'value'], foot: '₹0.00', sub: 'Total' },
  { title: ['Website', 'purchases', 'conversion…'], blue: true, foot: '₹0.00', sub: 'Total' },
  { title: ['Purchase', 'ROAS (return', 'on ad spend)'], foot: '—', sub: 'Average' },
  { title: ['Website', 'purchase', 'ROAS (return…'], foot: '—', sub: 'Average' },
  { title: ['Purchases'], foot: '—', sub: 'Total' },
  { title: ['Website', 'purchases'], foot: '—', sub: 'Total' }
]

type Row = { daily: boolean; spent: string; value: string; roas: string; count: string }
const rows: Row[] = [
  { daily: false, spent: '₹1,716.84', value: '₹25,813.00', roas: '15.04', count: '128' },
  { daily: false, spent: '₹3,374.01', value: '₹20,123.00', roas: '5.96', count: '71' },
  { daily: true, spent: '₹801.90', value: '₹19,472.00', roas: '24.28', count: '80' },
  { daily: false, spent: '₹2,980.47', value: '₹15,829.00', roas: '5.31', count: '50' },
  { daily: false, spent: '₹3,650.89', value: '₹14,307.00', roas: '3.92', count: '64' },
  { daily: true, spent: '₹799.86', value: '₹14,080.00', roas: '17.60', count: '50' },
  { daily: false, spent: '₹3,569.78', value: '₹12,759.00', roas: '3.57', count: '53' },
  { daily: true, spent: '₹800.95', value: '₹11,883.00', roas: '14.84', count: '50' },
  { daily: false, spent: '₹2,001.23', value: '₹11,285.00', roas: '5.64', count: '38' }
]
const metrics = (r: Row) => [r.value, r.value, r.roas, r.roas, r.count, r.count]

const dockApps: { n: string; badge?: string; run?: boolean }[] = [
  { n: 'finder', run: true }, { n: 'launch' }, { n: 'safari' }, { n: 'chrome', run: true }, { n: 'firefox' }, { n: 'messages' },
  { n: 'mail' }, { n: 'maps' }, { n: 'photos' }, { n: 'facetime' }, { n: 'cal' }, { n: 'box' }, { n: 'remind', badge: '1' },
  { n: 'notes' }, { n: 'tv' }, { n: 'music' }, { n: 'pod' }, { n: 'keynote' }, { n: 'numbers' }, { n: 'pages' }, { n: 'store' },
  { n: 'prefs', badge: '2' }, { n: 'slack', badge: '•', run: true }, { n: 'notion' }, { n: 'discord' }, { n: 'asana' },
  { n: 'dee' }, { n: 'zoom' }, { n: 'calc' }
]
</script>

<template>
  <div class="desktop">
    <header class="menubar">
      <Ico n="apple" :s="25" class="apple" />
      <span v-for="[m, w] in menus" :key="m" class="menu" :style="{ width: w + 'px' }">{{ m }}</span>
      <div class="status">
        <Ico n="bt" :s="25" class="st-bt" />
        <Ico n="play" :s="21" class="st-play" />
        <span class="pct">30%</span>
        <span class="battery"><i></i></span>
        <Ico n="wifi" :s="25" class="st-wifi" />
        <Ico n="lens" :s="21" class="st-lens" />
        <Ico n="control" :s="20" class="st-cc" />
        <Ico n="siri" :s="20" />
        <span class="date">Sun 9 Jul</span>
        <span class="time">9:18 PM</span>
      </div>
    </header>

    <div class="window">
      <div class="tabstrip">
        <div class="lights"><i class="r"></i><i class="y"></i><i class="g"></i></div>
        <div v-for="([ic, t], i) in tabs" :key="i" class="tab" :class="{ wide: i < 6, last: i === 24 }">
          <Ico :n="ic" :s="22" /><span>{{ t }}</span>
        </div>
        <div class="tab active"><Ico n="meta" :s="23" /><Ico n="x" :s="16" /></div>
        <Ico n="plus" :s="20" class="newtab" />
        <Ico n="chev" :s="18" class="tabmenu" />
      </div>

      <div class="toolbar">
        <Ico n="back" :s="22" class="nav" />
        <Ico n="fwd" :s="22" class="nav dim" />
        <Ico n="reload" :s="23" class="nav rel" />
        <div class="omni">
          <div class="smear"></div>
          <Ico n="install" :s="23" /><Ico n="share" :s="23" /><Ico n="star" :s="23" />
        </div>
        <div class="exts">
          <span v-for="e in exts" :key="e" class="ext"><Ico :n="e" :s="22" /><b v-if="e === 'code'">1</b></span>
        </div>
        <div class="smear2"></div>
        <div class="error">Error<span class="kebab"><i></i><i></i><i></i></span></div>
      </div>

      <div class="bookmarks">
        <div v-for="[ic, t, w] in bookmarks" :key="t" class="bm" :class="ic" :style="{ width: w + 'px' }">
          <Ico :n="ic" :s="22" /><span>{{ t }}</span>
        </div>
        <span class="raquo">»</span><span class="bmsep"></span>
        <div class="smear3"></div>
      </div>

      <div class="page">
        <nav class="side">
          <Ico n="meta" :s="42" class="logo" />
          <Ico n="menu" :s="31" class="burger" />
          <div class="avatar">A</div>
          <div class="withbadge gauge"><Ico n="gauge" :s="36" /><b>1</b></div>
          <div class="sidetile"><Ico n="grid" :s="32" /></div>
          <div class="sidegap"></div>
          <hr />
          <div class="withbadge news"><Ico n="news" :s="31" /><b>1</b></div>
          <Ico n="gear" :s="29" /><Ico n="bell" :s="27" /><Ico n="lens" :s="29" /><Ico n="help" :s="28" />
          <Ico n="bug" :s="27" /><Ico n="sidepanel" :s="28" />
        </nav>

        <main class="main">
          <div class="head">
            <h1>Ad sets</h1>
            <div class="account"><div class="smear4"></div></div>
            <span class="updated">Updated just now</span>
            <button class="btn sq"><Ico n="refresh" :s="26" /></button>
            <button class="btn discard">Discard Drafts</button>
            <button class="btn review">Review and publish</button>
            <button class="btn sq2"><Ico n="more" :s="23" /></button>
          </div>

          <div class="filters">
            <div class="search"><Ico n="lens" :s="24" /><span>Search and filter</span></div>
            <div class="range"><div class="smear5"></div></div>
          </div>

          <div class="levels">
            <div class="level"><Ico n="camp" :s="26" /><span>Campaigns</span></div>
            <div class="level on"><Ico n="sets" :s="30" /><span>Ad sets</span></div>
            <div class="level"><Ico n="ads" :s="25" /><span>Ads</span></div>
          </div>

          <section class="card">
            <div class="tools">
              <button class="t create"><Ico n="plus" :s="18" />Create</button>
              <button class="t off l w55"><Ico n="copy" :s="24" /></button>
              <button class="t off r w54 gap11"><Ico n="caret" :s="15" /></button>
              <button class="t off l edit"><Ico n="pencil" :s="22" />Edit</button>
              <button class="t off r w54 gap11"><Ico n="caret" :s="15" /></button>
              <button class="t off ab"><Ico n="flask" :s="23" />A/B test</button>
              <button class="t off w55 gap11"><Ico n="clip" :s="23" /></button>
              <button class="t off l w55"><Ico n="undo" :s="23" /></button>
              <button class="t off m w54"><Ico n="trash" :s="22" /></button>
              <button class="t off m w54"><Ico n="people" :s="23" /></button>
              <button class="t r swap"><Ico n="swap" :s="23" /></button>
              <button class="t rules">Rules<Ico n="caret" :s="15" /></button>
              <span class="setup">View Setup</span>
              <span class="setupswitch"></span>
              <button class="t drop"><Ico n="cols" :s="24" /><Ico n="caret" :s="15" /></button>
              <button class="t drop"><Ico n="tree" :s="24" /><Ico n="caret" :s="15" /></button>
              <button class="t reports"><Ico n="report" :s="24" />Reports<Ico n="caret" :s="15" /></button>
            </div>

            <div class="table">
              <div class="tr thead">
                <div class="c check"><span class="cb"></span></div>
                <div class="c onoff">Off/On</div>
                <div class="c name"><span class="clip">A<br />s</span><Ico n="caret" :s="10" /></div>
                <div class="c gapcol"><Ico n="caret" :s="10" /></div>
                <div v-for="(c, i) in cols" :key="i" class="c metric" :class="{ blue: c.blue }">
                  <span><template v-for="(l, j) in c.title" :key="j"><br v-if="j" />{{ l }}</template></span>
                  <Ico n="caret" :s="10" />
                </div>
                <div class="c last">Cost per<br />purchase</div>
              </div>

              <div class="body">
                <div v-for="(r, i) in rows" :key="i" class="tr row" :class="{ odd: i % 2, hover: i === 3 }">
                  <div class="c check"><span class="cb"></span></div>
                  <div class="c onoff"><span class="switch"></span></div>
                  <div class="c name"><Ico v-if="i === 3" n="bars" :s="19" /></div>
                  <div class="c gapcol"></div>
                  <div class="c metric budget" :class="{ right: r.daily }">
                    <template v-if="r.daily"><span>₹100.00</span><small>Daily</small></template>
                    <template v-else>Using campaig…</template>
                  </div>
                  <div class="c metric num">{{ r.spent }}</div>
                  <div v-for="(m, j) in metrics(r)" :key="j" class="c metric num"><u>{{ m }}</u><sup>[2]</sup></div>
                  <div class="c last"><u>₹20</u></div>
                </div>
                <div class="vthumb"></div>
              </div>

              <div class="tr tfoot">
                <div class="c wide2"></div>
                <div class="c name">R…</div>
                <div class="c metric first"></div>
                <div v-for="(c, i) in cols.slice(1)" :key="i" class="c metric">
                  <b :class="{ dash: c.foot === '—' }">{{ c.foot }}</b><small>{{ c.sub }}</small>
                </div>
                <div class="c last"></div>
              </div>
              <div class="hscroll"><i></i></div>
            </div>
          </section>
        </main>

        <aside class="rail">
          <Ico n="thinx" :s="23" />
          <div class="railtile"><Ico n="bars" :s="24" /></div>
          <Ico n="pencil" :s="23" />
          <Ico n="clock" :s="24" />
        </aside>
      </div>
    </div>

    <footer class="dockarea">
      <div class="dock">
        <div v-for="a in dockApps" :key="a.n" class="app">
          <Ico :n="a.n" :s="44" /><b v-if="a.badge">{{ a.badge }}</b><i v-if="a.run"></i>
        </div>
        <span class="dsep"></span>
        <div class="app"><Ico n="preview" :s="44" /></div>
        <div class="app"><Ico n="qt" :s="44" /></div>
        <span class="dsep"></span>
        <div class="app bin"><Ico n="trash2" :s="44" /></div>
      </div>
    </footer>
  </div>
</template>

<style>
html,
body {
  margin: 0;
  overflow: hidden;
}
</style>

<style scoped>
* {
  box-sizing: border-box;
}
svg {
  flex: none;
  display: block;
}
.desktop {
  width: 2000px;
  height: 1300px;
  display: flex;
  flex-direction: column;
  background: #07121a;
  font-family: Inter, 'Liberation Sans', sans-serif;
  overflow: hidden;
}
.menubar {
  height: 49px;
  flex: none;
  display: flex;
  align-items: center;
  background: linear-gradient(90deg, #90d2ff 0 63%, #a2dcff 67%);
  color: #1c2a34;
  font-size: 17.500px;
  padding: 0 0 2px 24px;
}
.apple {
  margin-right: 23px;
}
.menu {
  white-space: nowrap;
}
.menu:nth-of-type(1) {
  font-weight: 700;
}
.status {
  margin-left: auto;
  display: flex;
  align-items: center;
  color: #2b3a44;
  width: 541px;
}
.st-play {
  margin-left: 21px;
}
.pct {
  margin-left: 22px;
  width: 39px;
  font-size: 15.300px;
  white-space: nowrap;
}
.battery {
  width: 32px;
  height: 16px;
  border: 1.500px solid #7393a8;
  border-radius: 5px;
  padding: 1.500px;
  position: relative;
}
.battery::after {
  content: '';
  position: absolute;
  right: -4px;
  top: 4px;
  width: 2px;
  height: 5px;
  border-radius: 0 2px 2px 0;
  background: #7393a8;
}
.battery i {
  display: block;
  width: 9px;
  height: 100%;
  background: #1c2a34;
  border-radius: 2px;
}
.st-wifi {
  margin-left: 25px;
}
.st-lens {
  margin-left: 24px;
}
.st-cc {
  margin: 0 22px 0 24px;
}
.date {
  margin-left: 22px;
  width: 86px;
  font-size: 17.700px;
  white-space: nowrap;
  color: #1c2a34;
}
.time {
  font-size: 18px;
  white-space: nowrap;
  color: #1c2a34;
}

.window {
  height: 1171px;
  flex: none;
  display: flex;
  flex-direction: column;
  border-radius: 16px 16px 18px 18px;
  overflow: hidden;
  background: #2b2d2e;
}
.tabstrip {
  height: 58px;
  flex: none;
  background: #000;
  border-top: 2px solid #3b4247;
  border-radius: 16px 16px 0 0;
  display: flex;
  align-items: center;
  color: #e8eaea;
  padding-top: 10px;
}
.lights {
  width: 127.500px;
  flex: none;
  display: flex;
  gap: 11px;
  padding: 0 0 9px 28.500px;
}
.lights i {
  width: 16px;
  height: 16px;
  border-radius: 50%;
}
.lights .r {
  background: #f74e5b;
}
.lights .y {
  background: #fbad28;
}
.lights .g {
  background: #2ecc45;
}
.tab {
  width: 65.200px;
  flex: none;
  height: 27px;
  display: flex;
  align-items: center;
  padding-left: 9.500px;
  border-right: 1.500px solid #4a4d4f;
}
.tab.wide {
  width: 66.700px;
}
.tab.last {
  border-right-color: transparent;
}
.tab span {
  margin-left: 11px;
  width: 15px;
  overflow: hidden;
  font-size: 16px;
  white-space: nowrap;
  mask-image: linear-gradient(90deg, #000 50%, transparent 105%);
}
.tab.active {
  align-self: flex-end;
  height: 46px;
  margin-top: -10px;
  background: #2b2d2e;
  border: 0;
  border-radius: 10px 10px 0 0;
  gap: 4px;
  width: 66.500px;
}
.newtab {
  margin-left: 20px;
}
.tabmenu {
  margin-left: auto;
  margin-right: 21px;
}
.toolbar {
  height: 48px;
  flex: none;
  display: flex;
  align-items: center;
  color: #d6d8d8;
  position: relative;
}
.nav {
  margin-left: 19px;
}
.nav.dim {
  color: #7c7f80;
  margin-left: 21px;
}
.nav.rel {
  margin-left: 21px;
}
.omni {
  margin-left: 19px;
  width: 1035px;
  height: 39px;
  border-radius: 20px;
  background: #3c3e40;
  display: flex;
  align-items: center;
  justify-content: flex-end;
  gap: 20.500px;
  padding-right: 13px;
  color: #b8bbbc;
  position: relative;
}
.smear {
  position: absolute;
  left: 17px;
  top: 8px;
  width: 876px;
  height: 36px;
  background: linear-gradient(180deg, #36383a, #3c3e40 45%, #505254);
}
.exts {
  display: flex;
  margin-left: 8px;
  width: 642px;
  overflow: hidden;
  height: 46px;
  align-items: center;
}
.ext {
  width: 43.500px;
  flex: none;
  display: flex;
  justify-content: center;
  position: relative;
}
.ext b {
  position: absolute;
  left: 25px;
  top: 13px;
  width: 16px;
  height: 17px;
  border-radius: 3px;
  background: #2ecc45;
  color: #14351b;
  font: 13px/17px Inter, sans-serif;
  text-align: center;
}
.smear2 {
  position: absolute;
  left: 1831px;
  top: -3px;
  width: 69px;
  height: 48px;
  background: linear-gradient(180deg, #303335, #36393a 40%, #4a4c4e);
}
.error {
  position: absolute;
  left: 1900px;
  top: 5px;
  width: 89px;
  height: 39px;
  border: 2px solid #f8ac28;
  border-left: 0;
  border-radius: 0 20px 20px 0;
  background: #3a3a36;
  color: #f8ac28;
  font-size: 17px;
  display: flex;
  align-items: center;
  padding-left: 8px;
}
.kebab {
  margin-left: 19px;
  display: grid;
  gap: 4px;
}
.kebab i {
  width: 4px;
  height: 4px;
  border-radius: 50%;
  background: #f8ac28;
}
.bookmarks {
  height: 46px;
  flex: none;
  display: flex;
  align-items: center;
  padding: 0 0 6px 19px;
  color: #f2f3f3;
  font-size: 16px;
  position: relative;
  border-bottom: 1.500px solid #555859;
}
.bm {
  display: flex;
  align-items: center;
  gap: 11px;
  white-space: nowrap;
  flex: none;
}
.bm.wa {
  gap: 15px;
}
.bm.wa span {
  letter-spacing: 0.1px;
}
.raquo {
  margin-left: 7px;
  width: 25px;
  font-size: 17px;
}
.bmsep {
  width: 1.500px;
  height: 22px;
  background: #555859;
}
.smear3 {
  position: absolute;
  left: 1820px;
  top: -4px;
  width: 180px;
  height: 40px;
  background: linear-gradient(176deg, #3c3f40, #58595b 50%, #7d7f80);
}
.smear3::before {
  content: '';
  position: absolute;
  left: -1px;
  top: 16px;
  width: 1.500px;
  height: 15px;
  background: #e8e8e8;
}

.page {
  flex: 1;
  display: flex;
  min-height: 0;
  font-family: Roboto, 'Liberation Sans', sans-serif;
  color: #1c2328;
}
.side {
  width: 77px;
  flex: none;
  border-right: 1.500px solid #dcdddd;
  background: linear-gradient(180deg, #fff 94%, #f0f0f0);
  display: flex;
  flex-direction: column;
  align-items: center;
  padding: 0 0 21px 1px;
  color: #22282c;
}
.logo {
  margin-top: 19px;
}
.burger {
  margin-top: 24px;
}
.avatar {
  margin-top: 34px;
  width: 43px;
  height: 43px;
  border-radius: 50%;
  background: #90d2ff;
  color: #1a5cb8;
  font: 700 24px/43px Roboto, sans-serif;
  text-align: center;
}
.withbadge {
  position: relative;
  color: #111;
}
.withbadge b {
  position: absolute;
  width: 25px;
  height: 25px;
  border-radius: 50%;
  background: #d5402e;
  color: #fff;
  font: 500 17px/25px Roboto, sans-serif;
  text-align: center;
}
.gauge {
  margin-top: 33px;
}
.gauge b {
  left: 19px;
  top: -3px;
}
.sidetile {
  margin-top: 13px;
  width: 54px;
  height: 54px;
  border-radius: 7px;
  background: #f0f0f0;
  color: #0f78ee;
  display: grid;
  place-items: center;
}
.sidegap {
  flex: 1;
}
.side hr {
  width: 32px;
  border: 0;
  height: 1.500px;
  background: #cfd2d2;
  margin: 0 0 20px;
}
.side > svg:nth-last-child(-n + 6) {
  margin-top: 21px;
}
.side > svg:nth-last-child(6) {
  margin-top: 19px;
}
.news b {
  left: 20px;
  top: -7px;
}

.main {
  flex: 1;
  min-width: 0;
  padding: 11px 11px 0 10px;
  background: linear-gradient(180deg, #f1f1f1 90%, #e8e9ea 97%, #d8dadb 99%);
}
.head {
  display: flex;
  align-items: center;
  height: 49px;
}
h1 {
  margin: 0 0 0 7px;
  width: 101px;
  font-size: 24.300px;
  line-height: 28px;
  font-weight: 700;
  color: #3a3f42;
  white-space: nowrap;
}
.account {
  width: 408px;
  height: 49px;
  background: #fff;
  border: 1.500px solid #dadcdc;
  border-radius: 6px;
  position: relative;
}
.smear4 {
  position: absolute;
  left: -12px;
  top: 9px;
  width: 447px;
  height: 33px;
  background: linear-gradient(180deg, #bcbdbe, #c9cacb 50%, #d9dadb);
}
.updated {
  margin-left: auto;
  margin-right: 22px;
  font-size: 19.050px;
  white-space: nowrap;
}
.btn {
  height: 49px;
  padding: 0;
  border: 0;
  border-radius: 7px;
  background: #d8dadb;
  color: #8b8f92;
  font: 19.100px Roboto, sans-serif;
  display: grid;
  place-items: center;
  white-space: nowrap;
}
.sq,
.sq2 {
  width: 54px;
  background: #e5e7e7;
  color: #1c2328;
}
.sq {
  margin-right: 11px;
}
.discard {
  width: 164px;
  margin-right: 11px;
}
.review {
  width: 206px;
  margin-right: 11px;
}
.filters {
  display: flex;
  margin-top: 20px;
  gap: 4px;
  margin-left: -1px;
}
.search {
  width: 1466px;
  height: 51px;
  background: #fff;
  border: 1.500px solid #e2e4e4;
  border-radius: 10px;
  display: flex;
  align-items: center;
  padding-left: 16px;
  gap: 23px;
  font-size: 19.200px;
  color: #7b7f82;
  box-shadow: 0 1px 1px #dcdddd;
}
.search svg {
  color: #111;
}
.range {
  flex: 1;
  height: 50px;
  border-radius: 7px;
  background: #e4e6e6;
  padding: 5px 18px 0 15px;
}
.smear5 {
  height: 44px;
  background: linear-gradient(90deg, #e9ebeb, #e0e2e2 40%, #e2e4e4 88%, #c4c6c8);
}
.levels {
  display: flex;
  align-items: flex-end;
  gap: 11px;
  margin: 11px 11px 0;
  height: 59px;
}
.level {
  width: 599.500px;
  height: 54px;
  border-radius: 9px 9px 0 0;
  background: #fafafa;
  display: flex;
  align-items: center;
  padding-left: 17px;
  gap: 12px;
  font-weight: 700;
  font-size: 21.800px;
  box-shadow: 1px 0 2px #dcdddd;
}
.level svg {
  color: #3a3f42;
}
.level.on {
  height: 59px;
  background: #fff;
  color: #165cc0;
  padding-left: 18px;
}
.card {
  height: 802px;
  background: #fff;
  border-radius: 10px;
  box-shadow: 0 0 2px #c8cacc;
  overflow: hidden;
  position: relative;
  clip-path: inset(0 -4px -4px -4px);
}
.tools {
  height: 71px;
  display: flex;
  align-items: flex-start;
  padding: 11px 11px 0;
}
.t {
  height: 49px;
  padding: 0;
  border: 0;
  border-radius: 7px;
  background: #f1f1f1;
  color: #2b3135;
  font: 19px Roboto, sans-serif;
  display: flex;
  align-items: center;
  justify-content: center;
  flex: none;
  white-space: nowrap;
}
.off {
  background: #e4e6e6;
  color: #7e8385;
}
.l {
  border-radius: 7px 0 0 7px;
  margin-right: 2.500px;
}
.m {
  border-radius: 0;
  margin-right: 3px;
}
.r {
  border-radius: 0 7px 7px 0;
}
.w55 {
  width: 54.500px;
}
.w54 {
  width: 54.300px;
}
.gap11 {
  margin-right: 11px;
}
.create {
  width: 127.500px;
  margin-right: 11px;
  background: #badf93;
  color: #f3faec;
  gap: 14px;
}
.edit {
  width: 102.500px;
  gap: 12px;
}
.ab {
  width: 140px;
  margin-right: 11px;
  gap: 12px;
}
.swap {
  width: 60px;
  margin-right: 11px;
}
.rules {
  width: 117.500px;
  gap: 17px;
}
.setup {
  margin-left: auto;
  margin-right: 11px;
  font-size: 19.200px;
  line-height: 49px;
  white-space: nowrap;
}
.setupswitch {
  width: 51px;
  height: 30px;
  margin: 10px 12px 0 0;
  border: 1.500px solid #cfd2d2;
  border-radius: 15px;
  background: radial-gradient(circle at 14px 50%, #3c3f42 10.500px, #fff 11.500px);
}
.drop {
  width: 86.500px;
  margin-right: 11.500px;
  padding-right: 5px;
  gap: 13px;
}
.reports {
  width: 163px;
  margin-left: 10.500px;
  padding-right: 3px;
  gap: 10px;
}
.reports svg:last-child {
  margin-left: 5px;
}

.tr {
  display: flex;
}
.c {
  flex: none;
  border-right: 1.500px solid #d8dadb;
  position: relative;
}
.check {
  width: 66.500px;
}
.onoff {
  width: 117px;
}
.name {
  width: 56px;
  border-right: 2px solid #d3d5d6;
  box-shadow: 2px 0 2px #e6e7e7;
  z-index: 1;
}
.gapcol {
  width: 50px;
}
.metric {
  width: 182.300px;
}
.c.last {
  width: 94px;
  border: 0;
  overflow: hidden;
  white-space: nowrap;
}
.cb {
  display: block;
  width: 32px;
  height: 32px;
  border: 1.500px solid #cfd2d2;
  border-radius: 7px;
  background: #fff;
  margin-left: 17px;
}
.thead {
  height: 88.500px;
  border-top: 1.500px solid #d8dadb;
  border-bottom: 2px solid #d8dadb;
  font-weight: 700;
  font-size: 18.200px;
  line-height: 22px;
}
.thead .c {
  display: flex;
  align-items: center;
  justify-content: space-between;
  padding: 1px 11px 0 14px;
}
.thead .c svg {
  color: #b4b7b9;
}
.thead .check {
  padding: 1px 0 0;
}
.thead .name {
  padding: 1px 12px 0 14px;
}
.thead .clip {
  width: 6px;
  overflow: hidden;
}
.thead .gapcol {
  justify-content: flex-end;
}
.thead .blue span {
  color: #0f78ee;
}
.body {
  height: 536px;
  overflow: hidden;
  position: relative;
}
.row {
  height: 62.600px;
  font-size: 19.100px;
  line-height: 24px;
  background: #fff;
}
.row .c {
  padding-top: 7.500px;
}
.row.odd {
  background: #f5f5f5;
}
.row.hover {
  background: #f1f1f1;
}
.row .check {
  padding-top: 15.500px;
}
.row .onoff {
  border-right: 0;
  padding: 5.500px 0 0 32px;
}
.row .name::before {
  content: '';
  position: absolute;
  left: -1px;
  top: 0;
  width: 1.500px;
  height: 41px;
  background: #d8dadb;
}
.row .name svg {
  margin: 30px 0 0 15px;
  color: #3c4145;
}
.switch {
  display: block;
  width: 52px;
  height: 30px;
  border: 1.500px solid #b9bcbd;
  border-radius: 15px;
  background: radial-gradient(circle at 36px 50%, #6da2e2 14px, #e3e5e5 14.500px);
}
.odd .switch {
  background: radial-gradient(circle at 36px 50%, #6da2e2 14px, #d6d8d9 14.500px);
}
.budget {
  padding-left: 17px;
}
.budget.right,
.num {
  text-align: right;
  padding-right: 16px;
}
.budget.right {
  display: flex;
  flex-direction: column;
}
small {
  font-size: 16.500px;
  color: #8b8f91;
}
.budget small {
  margin-top: 3px;
}
u {
  text-decoration: none;
  border-bottom: 2px dotted #22282c;
  display: inline-block;
  line-height: 19px;
}
sup {
  font-size: 12.500px;
  line-height: 0;
  margin-left: 6px;
  vertical-align: 4px;
}
.row .last {
  padding-left: 89px;
}
.vthumb {
  position: absolute;
  left: 1827px;
  top: 5px;
  width: 10px;
  height: 73px;
  border-radius: 5px;
  background: #bbbdbe;
}
.tfoot {
  height: 86px;
  border-top: 3px solid #e3e4e5;
  border-bottom: 2px solid #e3e4e5;
  background: #fff;
  box-shadow: 0 -2px 3px #eceded;
  position: relative;
}
.wide2 {
  width: 183.500px;
}
.tfoot .name {
  padding: 8px 0 0 16px;
  font-weight: 700;
  font-size: 19.100px;
  line-height: 24px;
}
.tfoot .metric {
  display: flex;
  flex-direction: column;
  align-items: flex-end;
  padding: 8px 8px 0 0;
  gap: 5px;
}
.tfoot .first {
  width: 232.300px;
}
.tfoot b {
  font-size: 19.100px;
  line-height: 24px;
}
.tfoot small {
  line-height: 20px;
}
.tfoot .dash {
  font-size: 18px;
  color: #5c6063;
}
.hscroll {
  height: 21px;
  background: linear-gradient(#fff, #f0f0f0);
  padding: 5px 0 0 63px;
}
.hscroll i {
  display: block;
  width: 465px;
  height: 9px;
  border-radius: 5px;
  background: #bbbdbe;
}
.rail {
  width: 60px;
  flex: none;
  background: #5f6160;
  color: #c0c2c2;
  display: flex;
  flex-direction: column;
  align-items: center;
  padding-top: 24px;
}
.railtile {
  width: 49px;
  height: 49px;
  margin: 24px 0 24px;
  border-radius: 7px;
  background: #7a7e7d;
  color: #fff;
  display: grid;
  place-items: center;
}
.rail > svg:last-child {
  margin-top: 36px;
}

.dockarea {
  flex: 1;
  display: flex;
  justify-content: center;
  padding-top: 4px;
  background: repeating-linear-gradient(35deg, #07121a 0 3px, #0c1a23 3px 5px, #061017 5px 9px);
}
.dock {
  width: 1908px;
  height: 69px;
  border: 1.500px solid #3a4448;
  border-radius: 17px;
  background: linear-gradient(90deg, #1a2126 40%, #1f2f38 60%);
  display: flex;
  padding: 10px 0 0 2px;
}
.app {
  width: 57.800px;
  flex: none;
  display: flex;
  flex-direction: column;
  align-items: center;
  position: relative;
}
.app i {
  width: 5px;
  height: 5px;
  border-radius: 50%;
  background: #a5a8aa;
  margin-top: 7px;
}
.app b {
  position: absolute;
  right: 0;
  top: -6px;
  width: 20px;
  height: 20px;
  border-radius: 50%;
  background: #e0443a;
  color: #fbd5d0;
  font: 13px/20px Inter, sans-serif;
  text-align: center;
}
.dsep {
  width: 1.500px;
  height: 50px;
  background: #4d585e;
  margin: 0 11px 0 13px;
  flex: none;
}
.bin {
  margin-top: -3px;
}
</style>
